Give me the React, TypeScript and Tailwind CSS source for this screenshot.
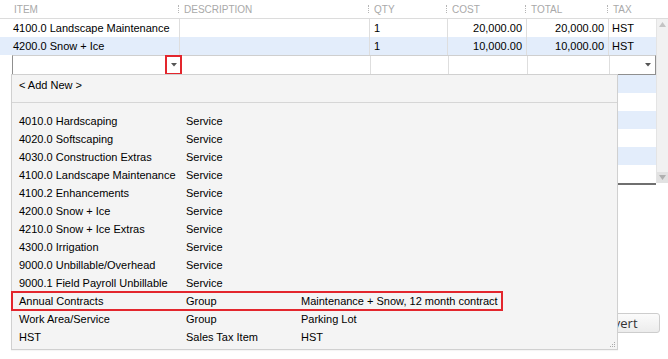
import React from "react";

const cols = [
  { key: "item", label: "ITEM", w: "w-[180px]" },
  { key: "desc", label: "DESCRIPTION", w: "w-[190px]" },
  { key: "qty", label: "QTY", w: "w-[78px]" },
  { key: "cost", label: "COST", w: "w-[79px]" },
  { key: "total", label: "TOTAL", w: "w-[82px]" },
  { key: "tax", label: "TAX", w: "w-[47px]" },
];

const lines = [
  { item: "4100.0 Landscape Maintenance", qty: "1", cost: "20,000.00", total: "20,000.00", tax: "HST", bg: "bg-white" },
  { item: "4200.0 Snow + Ice", qty: "1", cost: "10,000.00", total: "10,000.00", tax: "HST", bg: "bg-[#e3edfb]" },
];

const options = [
  ["4010.0 Hardscaping", "Service", ""],
  ["4020.0 Softscaping", "Service", ""],
  ["4030.0 Construction Extras", "Service", ""],
  ["4100.0 Landscape Maintenance", "Service", ""],
  ["4100.2 Enhancements", "Service", ""],
  ["4200.0 Snow + Ice", "Service", ""],
  ["4210.0 Snow + Ice Extras", "Service", ""],
  ["4300.0 Irrigation", "Service", ""],
  ["9000.0 Unbillable/Overhead", "Service", ""],
  ["9000.1 Field Payroll Unbillable", "Service", ""],
  ["Annual Contracts", "Group", "Maintenance + Snow, 12 month contract"],
  ["Work Area/Service", "Group", "Parking Lot"],
  ["HST", "Sales Tax Item", "HST"],
];

function Caret({ className = "" }: { className?: string }) {
  return (
    <svg width="6" height="4" viewBox="0 0 6 4" className={className}>
      <path d="M0 0h6L3 3.5z" fill="#555" />
    </svg>
  );
}

export default function App() {
  return (
    <div
      className="relative w-[668px] h-[359px] overflow-hidden bg-white text-[11px] text-black"
      style={{ fontFamily: '"Liberation Sans", Arial, sans-serif' }}
    >
      {/* header */}
      <div className="flex h-[19px] border-b border-[#dcdcdc] text-[10px] text-[#a9a9a9] uppercase">
        {cols.map((c, i) => (
          <div key={c.key} className={`${c.w} flex items-center ${i === 0 ? "pl-[14px]" : "pl-0"}`}>
            {i > 0 && <div className="h-[8px] w-0 border-l border-dotted border-[#b5b5b5] -ml-[2px]" />}
            <span className={i > 0 ? "ml-[5px]" : ""}>{c.label}</span>
          </div>
        ))}
      </div>

      <div className="flex">
        {/* grid body */}
        <div className="w-[656px]">
          {lines.map((r, idx) => (
            <div key={idx} className={`flex h-[18px] items-center ${r.bg}`}>
              <div className="w-[180px] pl-[13px] h-full flex items-center border-r border-[#dedede]">{r.item}</div>
              <div className="w-[190px] h-full border-r border-[#dedede]" />
              <div className="w-[78px] pl-[4px] h-full flex items-center border-r border-[#dedede]">{r.qty}</div>
              <div className="w-[79px] pr-[4px] h-full flex items-center justify-end border-r border-[#dedede]">{r.cost}</div>
              <div className="w-[82px] pr-[4px] h-full flex items-center justify-end border-r border-[#dedede]">{r.total}</div>
              <div className="w-[47px] pl-[3px] h-full flex items-center">{r.tax}</div>
            </div>
          ))}

          {/* edit row */}
          <div className="flex h-[20px] ml-[12px] border border-t-[#cfcfcf] border-x-[#8f8f8f] border-b-[#8f8f8f] bg-white">
            <div className="relative w-[168px] h-full border-r border-[#dedede]">
              <div className="absolute right-[-2px] -top-[1px] w-[17px] h-[20px] border-2 border-[#e3262d] flex items-center justify-center">
                <Caret />
              </div>
            </div>
            <div className="w-[190px] h-full border-r border-[#dedede]" />
            <div className="w-[78px] h-full border-r border-[#dedede]" />
            <div className="w-[79px] h-full border-r border-[#dedede]" />
            <div className="w-[82px] h-full border-r border-[#dedede]" />
            <div className="flex-1 h-full flex items-center justify-end pr-[4px]">
              <Caret />
            </div>
          </div>

          {/* empty striped rows */}
          <div className="ml-[12px] border-b-2 border-[#6f6f6f]">
            {[0, 1, 2, 3, 4, 5].map((i) => (
              <div key={i} className={`h-[18px] ${i % 2 === 0 ? "bg-[#e3edfb]" : "bg-white"}`} />
            ))}
          </div>
        </div>

        {/* scrollbar */}
        <div className="w-[12px] h-[164px] bg-[#f1f1f1] border-l border-[#e4e4e4] flex flex-col justify-between">
          <div className="h-[10px] flex items-center justify-center">
            <svg width="7" height="5" viewBox="0 0 7 5"><path d="M0 5h7L3.5 0z" fill="#c4c4c4" /></svg>
          </div>
          <div className="h-[11px] bg-[#e2e2e2] flex items-center justify-center">
            <svg width="7" height="5" viewBox="0 0 7 5"><path d="M0 0h7L3.5 5z" fill="#b0b0b0" /></svg>
          </div>
        </div>
      </div>

      {/* footer buttons */}
      <div className="flex justify-end pr-[8px] mt-[128px]">
        <button
          className="h-[20px] w-[84px] rounded-[3px] border border-[#cdcdcd] bg-gradient-to-b from-[#fbfbfb] to-[#ececec] text-[13px] text-[#333]"
          style={{ fontFamily: '"Open Sans", sans-serif' }}
        >
          Revert
        </button>
      </div>

      {/* dropdown popup */}
      <div className="absolute left-[11px] top-[74px] w-[607px] h-[276px] bg-[#f4f4f4] border border-[#d0d0d0] shadow-[0_1px_1px_rgba(0,0,0,0.04)]">
        <div className="h-[18px] mt-[1px] pl-[7px] flex items-center">&lt; Add New &gt;</div>
        <div className="mt-[8px] mb-[9px] border-t border-[#d6d6d6]" />
        {options.map(([name, type, desc]) => (
          <div key={name} className="relative flex h-[18px] items-center">
            <div className="w-[174px] pl-[7px]">{name}</div>
            <div className="w-[115px]">{type}</div>
            <div>{desc}</div>
            {name === "Annual Contracts" && (
              <div className="absolute -left-[1px] -top-[1px] w-[492px] h-[20px] border-2 border-[#e3262d]" />
            )}
          </div>
        ))}
        <svg className="absolute right-[1px] bottom-[1px]" width="6" height="6" viewBox="0 0 6 6">
          <rect x="4" y="0" width="1" height="1" fill="#aaa" />
          <rect x="2" y="2" width="1" height="1" fill="#aaa" />
          <rect x="4" y="2" width="1" height="1" fill="#aaa" />
          <rect x="0" y="4" width="1" height="1" fill="#aaa" />
          <rect x="2" y="4" width="1" height="1" fill="#aaa" />
          <rect x="4" y="4" width="1" height="1" fill="#aaa" />
        </svg>
      </div>
    </div>
  );
}
